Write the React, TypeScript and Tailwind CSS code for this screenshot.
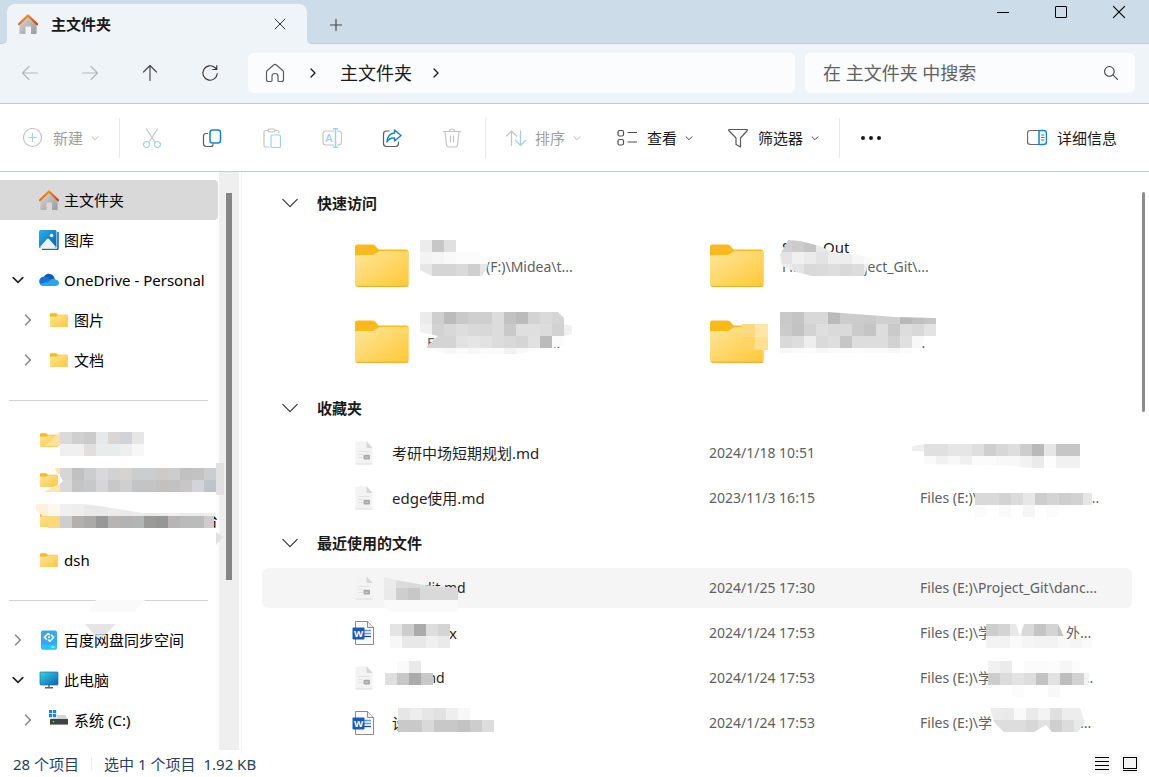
import React from "react";

type SvgProps = { className?: string };

/* ---------- redaction mosaic ---------- */

function Mosaic({ rows, className, clip, cell = 12 }: { rows: string[]; className: string; clip?: string; cell?: number }) {
  const grid = rows.map((r) => r.split(" "));
  const cols = Math.max(...grid.map((r) => r.length));
  const w = cols * cell;
  const h = grid.length * cell;
  const id = React.useId();
  return (
    <svg aria-hidden="true" width={w} height={h} viewBox={`0 0 ${w} ${h}`} shapeRendering="crispEdges" className={`pointer-events-none absolute max-w-none ${className}`}>
      {clip && (
        <clipPath id={id}>
          <polygon points={clip} />
        </clipPath>
      )}
      <g clipPath={clip ? `url(#${id})` : undefined}>
        {grid.map((r, y) =>
          r.map((c, x) =>
            c === "-" ? null : (
              <rect key={`${x}-${y}`} x={x * cell} y={y * cell} width={cell} height={cell} fill={`#${c.length === 2 ? c + c + c : c}`} />
            ),
          ),
        )}
      </g>
    </svg>
  );
}

/* ---------- icons ---------- */

function HomeColor({ className }: SvgProps) {
  const id = React.useId();
  return (
    <svg viewBox="0 0 20 20" className={className} aria-hidden="true">
      <defs>
        <linearGradient id={id + "a"} x1="0" y1="0" x2="1" y2="1">
          <stop offset="0" stopColor="#d9d9d9" />
          <stop offset="1" stopColor="#9a9a9a" />
        </linearGradient>
        <linearGradient id={id + "b"} x1="0" y1="0" x2="1" y2="1">
          <stop offset="0" stopColor="#f9a01b" />
          <stop offset="1" stopColor="#cf3f0c" />
        </linearGradient>
      </defs>
      <path d="M1.400 9.500 10 2l8.600 7.500V19q0 1-1 1H13V12.600H7.500V20H2.400q-1 0-1-1Z" fill={`url(#${id}a)`} />
      <path d="M.8 10.200 10 1.500l9.200 8.700" fill="none" stroke={`url(#${id}b)`} strokeWidth="2.200" strokeLinecap="round" strokeLinejoin="round" />
    </svg>
  );
}

function GalleryIcon() {
  return (
    <svg viewBox="0 0 20 20" className="h-5 w-5" aria-hidden="true">
      <defs>
        <linearGradient id="gal" x1="0" y1="0" x2="1" y2="1">
          <stop offset="0" stopColor="#27b0ee" />
          <stop offset="1" stopColor="#0a5fb8" />
        </linearGradient>
      </defs>
      <path d="M19 2v16q0 1.500-1.500 1.500H3" fill="none" stroke="#1769b5" strokeWidth="1.600" />
      <rect x="0" y="0" width="17.500" height="18" rx="1.500" fill="url(#gal)" />
      <path d="m1 17 7-8q1-1 2 0l7 8q-.5 1-1.500 1H2.500q-1 0-1.500-1Z" fill="#e8f5fe" />
      <circle cx="12.600" cy="5.400" r="1.700" fill="#fff" />
    </svg>
  );
}

function CloudIcon() {
  return (
    <svg viewBox="0 0 20 20" className="h-5 w-5" aria-hidden="true">
      <path d="M4 10.500C4 5.500 8.500 2.500 12.500 4.500c2 1 3 2.500 3.200 4.500L10 13Z" fill="#0a5cb8" />
      <path d="M4.600 16a4.600 4.600 0 0 1 .3-9.200c2.100-.3 3.600.7 5.600 2l4 3L6 16Z" fill="#1078d4" />
      <path d="M10 11.500c1.500-2.600 4-3.200 6.300-2.200 2.500.7 3.700 2 3.700 3.700 0 2-1.500 3-3.500 3H4.600q-2 0-3.600-2Z" fill="#28a8ea" />
    </svg>
  );
}

function Folder({ className }: SvgProps) {
  const id = React.useId();
  return (
    <svg viewBox="0 0 54 43" preserveAspectRatio="none" className={className} aria-hidden="true">
      <defs>
        <linearGradient id={id} x1="0" y1="0" x2="1" y2="1">
          <stop offset="0" stopColor="#ffe69c" />
          <stop offset="1" stopColor="#ffc835" />
        </linearGradient>
      </defs>
      <path d="M0 3q0-2.500 2.500-2.500H17q2 0 3.200 1.200L23.500 5.500H51q2.500 0 2.500 2.500V14H0Z" fill="#fbb91c" />
      <path d="M0 12.500q0-1.500 1.500-1.500H17q1.500 0 3-1.200L23 8q1-.9 2.500-.9H52q1.700 0 1.700 1.700V40q0 2.500-2.500 2.500H2.500Q0 42.500 0 40Z" fill={`url(#${id})`} />
      <path d="M1 41.500q.7.900 2 .9h48q1.400 0 2-.9" fill="none" stroke="#eeb22c" strokeWidth="1.200" />
    </svg>
  );
}

function SyncDisk() {
  return (
    <svg viewBox="0 0 20 20" className="h-5 w-5" aria-hidden="true">
      <rect x="2" y="0.500" width="16" height="19" rx="2" fill="#35a7fb" />
      <path d="M2 14.500h16V17.500q0 2-2 2H4q-2 0-2-2Z" fill="#20c8fb" />
      <path d="M8 9.700 5.300 7.400 9.200 3.500 10.800 5M12 4.800l2.700 2.500-3.900 3.900L9.200 9.700M9 7.300h2" stroke="#fff" strokeWidth="1.600" fill="none" strokeLinejoin="round" />
      <path d="M12.500 17h3" stroke="#fff" strokeWidth="1" />
    </svg>
  );
}

function Monitor() {
  return (
    <svg viewBox="0 0 20 20" className="h-5 w-5" aria-hidden="true">
      <defs>
        <linearGradient id="mon" x1="0" y1="0" x2="1" y2="1">
          <stop offset="0" stopColor="#35d6dd" />
          <stop offset="1" stopColor="#0b62b9" />
        </linearGradient>
      </defs>
      <rect x="1" y="2" width="18" height="13" rx="0.800" fill="url(#mon)" stroke="#2a6f96" strokeWidth="0.700" />
      <path d="M10 15v2.500M6 17.700h8" stroke="#59636b" strokeWidth="1.500" />
    </svg>
  );
}

function Drive() {
  return (
    <svg viewBox="0 0 20 20" className="h-5 w-5" aria-hidden="true">
      <path d="M0 0h3.200v3.200H0zM4 0h3.200v3.200H4zM0 4h3.200v3.200H0zM4 4h3.200v3.200H4z" fill="#1686d9" />
      <path d="M8 5h8l3 4H1L3 8h5Z" fill="#d5d5d5" />
      <rect x="1" y="9" width="18" height="6" rx="0.500" fill="#3f4142" />
      <path d="M1 14.500h18" stroke="#8d8d8d" />
      <circle cx="4.500" cy="11.700" r="0.900" fill="#3ee04e" />
    </svg>
  );
}

function MdFile() {
  return (
    <svg viewBox="0 0 24 24" className="h-6 w-6 shrink-0" aria-hidden="true">
      <path d="M5.500.5H16L21.500 6v17H4.500V1.500q0-1 1-1Z" fill="#f3f3f3" />
      <path d="M4.500 23h17" stroke="#dcdcdc" strokeWidth="1" fill="none" />
      <path d="M15.500.5 21.500 7h-4.500q-1.500 0-1.500-1.500Z" fill="#d6d6d6" />
      <path d="M7.500 10.500h11M7.500 13.500h4M7.500 16.500h4" stroke="#e2e2e2" />
      <rect x="12.500" y="13.800" width="6.500" height="4.600" rx="1" fill="#a9a9a9" />
      <path d="M14 16.200h3.500" stroke="#cfcfcf" />
    </svg>
  );
}

function WordFile() {
  return (
    <svg viewBox="0 0 24 24" className="h-6 w-6 shrink-0" aria-hidden="true">
      <path d="M4.500.5H16.500L22.500 6.500V23.500H4.500Z" fill="#fbfbfb" stroke="#8b8b8b" strokeWidth="1" />
      <path d="M16.500.7V6.500h6" fill="#eee" stroke="#8b8b8b" />
      <path d="M13 9.500h7M13 12.500h7" stroke="#5a9dea" strokeWidth="1.300" />
      <path d="M13 15.500h7" stroke="#154fae" strokeWidth="1.300" />
      <rect x="1.500" y="6.500" width="12" height="12" rx="1" fill="#185abd" />
      <text x="7.500" y="16" textAnchor="middle" fontSize="9.500" fontWeight="700" fill="#fff" fontFamily="Open Sans">W</text>
    </svg>
  );
}

function Line({ d, className, w = 1.2 }: { d: string; className?: string; w?: number }) {
  return (
    <svg viewBox="0 0 20 20" className={className ?? "h-5 w-5"} fill="none" stroke="currentColor" strokeWidth={w} strokeLinecap="round" strokeLinejoin="round" aria-hidden="true">
      <path d={d} />
    </svg>
  );
}

function Caret() {
  return (
    <svg viewBox="0 0 8 8" className="h-2 w-2 opacity-80" fill="none" stroke="currentColor" aria-hidden="true">
      <path d="M.8 2.500 4 5.700l3.200-3.200" />
    </svg>
  );
}

const gray = "#c4c4c4";
const pale = "#a3cff2";

const ico = {
  plus: (
    <>
      <circle cx="9.500" cy="9.500" r="9" stroke={gray} />
      <path d="M9.500 5.500v8M5.500 9.500h8" stroke={pale} />
    </>
  ),
  cut: (
    <>
      <path d="M4.500 1 13 14M15.500 1 7 14" stroke={gray} />
      <circle cx="4.500" cy="16.500" r="3" stroke={pale} />
      <circle cx="15.500" cy="16.500" r="3" stroke={pale} />
    </>
  ),
  copy: (
    <>
      <path d="M5.500 5.500H4Q1.500 5.500 1.500 8v7.500Q1.500 18.500 4.500 18.500H8.500Q11 18.500 11 16.500" stroke="#5d5d5d" />
      <rect x="8" y="2" width="10.500" height="13" rx="2.500" stroke="#1583d8" strokeWidth="1.500" />
    </>
  ),
  paste: (
    <>
      <path d="M6 2.500H3.500Q2 2.500 2 4v13.500Q2 19 3.500 19H7M13 2.500h2.500Q17 2.500 17 4v1" stroke={gray} />
      <rect x="6" y="1" width="7" height="3" rx="1.500" stroke={gray} />
      <rect x="9" y="7" width="9.500" height="12.500" rx="1.500" stroke={pale} />
    </>
  ),
  rename: (
    <>
      <path d="M11.500 3H4Q1 3 1 6v8q0 3 3 3h7.500M15.500 3q4 0 4 3v8q0 3-4 3" stroke={gray} />
      <path d="M13.500 1v18M11.500.8h4M11.500 19.200h4" stroke={pale} strokeWidth="1.500" />
      <text x="7" y="14" textAnchor="middle" fontSize="11" fill={pale} stroke="none" fontWeight="600" fontFamily="Open Sans">A</text>
    </>
  ),
  share: (
    <>
      <path d="M7 3H4.500Q1.500 3 1.500 6v9.500q0 3 3 3h9q3 0 3-3V14" stroke="#5d5d5d" />
      <path d="M12.500 2 19 7.500 12.500 13V10q-5-.5-7.500 4Q5.500 5.500 12.500 5Z" stroke="#1583d8" strokeWidth="1.500" />
    </>
  ),
  trash: (
    <>
      <path d="M1.500 3.500h17M3 3.500 4.500 17q.3 2 2.500 2h6q2.200 0 2.500-2L17 3.500M7.500 3.500q0-2.500 2.500-2.500t2.500 2.500" stroke={gray} />
      <path d="M8.500 8v6M11.500 8v6" stroke={gray} />
    </>
  ),
  sort: (
    <>
      <path d="M5.500 17.500V3M.5 8l5-5 5 5" stroke={gray} />
      <path d="M14.500 3v14.500M9.500 12.500l5 5 5-5" stroke={pale} strokeWidth="1.300" />
    </>
  ),
  view: (
    <>
      <rect x="1" y="2.500" width="5.500" height="5.500" rx="1.500" stroke="#4f4f4f" />
      <rect x="1" y="11.500" width="5.500" height="5.500" rx="1.500" stroke="#4f4f4f" />
      <path d="M11 4.500h9M11 14h9" stroke="#4f4f4f" />
    </>
  ),
  filter: <path d="M1 1.500h18q.5 0 .3 1L12.500 10v9L8 16.500V10L.8 2.500Q.5 1.500 1 1.500Z" stroke="#5a5a5a" />,
  details: (
    <>
      <path d="M12 2.500H3.500q-3 0-3 3v8q0 3 3 3H12" stroke="#6a6a6a" />
      <path d="M12 2.500h4.500q3 0 3 3v8q0 3-3 3H12Z" stroke="#1583d8" strokeWidth="1.500" />
      <path d="M14.500 7h2.500M14.500 9.500h2.500M14.500 12h2.500" stroke="#1583d8" />
    </>
  ),
};

function Tool({ name }: { name: keyof typeof ico }) {
  return (
    <svg viewBox="0 0 20 20" className="h-5 w-5 shrink-0" fill="none" strokeWidth="1.200" strokeLinecap="round" strokeLinejoin="round" aria-hidden="true">
      {ico[name]}
    </svg>
  );
}

/* ---------- header ---------- */

function TitleBar() {
  return (
    <header className="flex h-11 items-end bg-[#ccdce9]">
      <div className="h-11 w-[7px] bg-[#eff4f9]">
        <div className="h-full rounded-br-[5px] border-b border-[#bccddc] bg-[#ccdce9]" />
      </div>
      <div className="flex h-10 w-[300px] items-center rounded-t-lg bg-[#eff4f9] pr-5 pl-[11px]">
        <HomeColor className="h-5 w-5" />
        <span className="ml-[13px] flex-1 font-bold text-[#191919]">主文件夹</span>
        <button aria-label="关闭标签页" className="text-[#333]">
          <Line className="h-[14px] w-[14px]" d="M3 3l14 14M17 3 3 17" w={1.4} />
        </button>
      </div>
      <div className="h-11 flex-1 bg-[#eff4f9]">
        <div className="flex h-full items-start justify-between rounded-bl-[5px] border-b border-[#bccddc] bg-[#ccdce9]">
          <button aria-label="新标签页" className="mt-[18px] ml-[22px] text-[#444]">
            <Line className="h-[14px] w-[14px]" d="M10 2v16M2 10h16" w={1.6} />
          </button>
          <div className="flex pr-[1px] text-black">
            <button aria-label="最小化" className="flex h-6 w-[58px] items-center justify-center">
              <span className="h-px w-3 bg-black" />
            </button>
            <button aria-label="最大化" className="flex h-6 w-[58px] items-center justify-center">
              <span className="h-3 w-3 rounded-[1px] border border-black" />
            </button>
            <button aria-label="关闭" className="flex h-6 w-[58px] items-center justify-center">
              <Line className="h-[14px] w-[14px]" d="M2 2l16 16M18 2 2 18" w={1.6} />
            </button>
          </div>
        </div>
      </div>
    </header>
  );
}

function NavBar() {
  const cls = "flex h-10 w-[60px] items-center justify-center";
  return (
    <nav className="flex h-[60px] items-start border-b border-[#bccad6] bg-[#eff4f9] pt-[9px] pr-[14px]">
      <button aria-label="后退" className={`${cls} text-[#b3b7ba]`}>
        <Line d="M17.500 10h-15M9 3.500 2.500 10 9 16.500" />
      </button>
      <button aria-label="前进" className={`${cls} text-[#b3b7ba]`}>
        <Line d="M2.500 10h15M11 3.500l6.500 6.500-6.500 6.500" />
      </button>
      <button aria-label="向上" className={`${cls} text-[#4a4a4a]`}>
        <Line d="M10 17.500v-15M3.500 9 10 2.500 16.500 9" />
      </button>
      <button aria-label="刷新" className={`${cls} text-[#333]`}>
        <Line d="M17.300 10.500a7.200 7.200 0 1 1-2.500-6L16.500 6M16.800 2.500v4h-4" w={1.1} />
      </button>
      <div className="ml-2 flex h-10 flex-1 items-center rounded-md bg-[#fbfcfe] pl-[17px] text-lg text-[#1a1a1a]">
        <span className="text-[#5c5c5c]">
          <Line d="M1.500 9.500q0-1.500 1-2.200L8.600 2Q10 .8 11.400 2l6.100 5.300q1 .7 1 2.200v7q0 2-2 2H14q-1 0-1-1V13q0-2.500-3-2.500T7 13v4.500q0 1-1 1H3.500q-2 0-2-2Z" />
        </span>
        <Line className="ml-5 h-4 w-4" d="M7.500 5 12.500 10l-5 5" w={1.600} />
        <a href="#home" className="ml-[19px]">主文件夹</a>
        <Line className="ml-4 h-4 w-4" d="M7.500 5 12.500 10l-5 5" w={1.600} />
      </div>
      <label className="ml-[10px] flex h-10 w-[330px] items-center rounded-md bg-[#fbfcfe] pr-4 pl-[18px]">
        <input aria-label="搜索" placeholder="在 主文件夹 中搜索" className="min-w-0 flex-1 bg-transparent text-lg outline-none placeholder:text-[#606163]" />
        <Line className="h-4 w-4 text-[#333]" d="M8 2a6 6 0 1 0 0 12A6 6 0 0 0 8 2M12.500 12.500l5.500 5.500" w={1.3} />
      </label>
    </nav>
  );
}

function Divider() {
  return <span className="h-10 w-px shrink-0 bg-[#e8e8e8]" />;
}

function Toolbar() {
  const icons: [keyof typeof ico, string][] = [
    ["cut", "剪切"],
    ["copy", "复制"],
    ["paste", "粘贴"],
    ["rename", "重命名"],
    ["share", "共享"],
    ["trash", "删除"],
  ];
  return (
    <div className="flex h-[68px] items-center border-b border-[#c3ccd4] pr-8 pl-[23px] text-[#1a1a1a]">
      <button disabled className="mr-5 flex items-center text-[#9f9f9f]">
        <Tool name="plus" />
        <span className="mr-2 ml-[10px]">新建</span>
        <Caret />
      </button>
      <Divider />
      <div className="flex pr-[3px] pl-[2px]">
        {icons.map(([name, label]) => (
          <button key={name} aria-label={label} className="flex h-10 w-[60px] items-center justify-center">
            <Tool name={name} />
          </button>
        ))}
      </div>
      <Divider />
      <button disabled className="ml-5 flex items-center text-[#9f9f9f]">
        <Tool name="sort" />
        <span className="mr-2 ml-[9px]">排序</span>
        <Caret />
      </button>
      <button className="ml-9 flex items-center">
        <Tool name="view" />
        <span className="mr-2 ml-[10px]">查看</span>
        <Caret />
      </button>
      <button className="mr-5 ml-[35px] flex items-center">
        <Tool name="filter" />
        <span className="mr-2 ml-[10px]">筛选器</span>
        <Caret />
      </button>
      <Divider />
      <button aria-label="更多" className="ml-[21px] flex gap-1">
        <span className="h-1 w-1 rounded-full bg-[#1a1a1a]" />
        <span className="h-1 w-1 rounded-full bg-[#1a1a1a]" />
        <span className="h-1 w-1 rounded-full bg-[#1a1a1a]" />
      </button>
      <button className="ml-auto flex items-center gap-[10px]">
        <Tool name="details" />
        详细信息
      </button>
    </div>
  );
}

/* ---------- sidebar ---------- */

type TreeProps = { icon: React.ReactNode; label?: string; open?: boolean; closed?: boolean; child?: boolean; active?: boolean; children?: React.ReactNode };

function TreeRow({ icon, label, open, closed, child, active, children }: TreeProps) {
  return (
    <li className={`relative flex h-10 items-center ${active ? "rounded-r-sm bg-[#d9d9d9]" : ""} ${child ? "pl-5" : "pl-[10px]"}`}>
      <span className="w-4 shrink-0">
        {open && <Line className="h-4 w-4 text-[#222]" d="M4 7l6 6 6-6" w={2} />}
        {closed && <Line className="h-4 w-4 text-[#8a8a8a]" d="M7 4l6 6-6 6" w={2} />}
      </span>
      <span className="ml-3 flex w-[22px] shrink-0 items-center justify-center">{icon}</span>
      {label && <a href="#folder" className="ml-1 whitespace-nowrap text-black">{label}</a>}
      {children}
    </li>
  );
}

function Separator() {
  return (
    <li aria-hidden="true" className="flex h-10 items-center pr-[10px] pl-[9px]">
      <span className="h-px w-full bg-[#d2d2d2]" />
    </li>
  );
}

function Sidebar() {
  const folder = <Folder className="h-[14px] w-[18px]" />;
  return (
    <aside className="flex w-[242px] shrink-0 border-r border-[#f3f3f3]">
      <ul className="relative z-10 w-[218px] pt-2">
        <TreeRow active icon={<HomeColor className="h-5 w-5" />} label="主文件夹" />
        <TreeRow icon={<GalleryIcon />} label="图库" />
        <TreeRow open icon={<CloudIcon />} label="OneDrive - Personal" />
        <TreeRow child closed icon={folder} label="图片" />
        <TreeRow child closed icon={folder} label="文档" />
        <Separator />
        <TreeRow icon={folder}>
          <svg className="absolute top-3 left-[45px]" width="15" height="14" aria-hidden="true">
            <path d="M0 14 15 0v14Z" fill="#fde29b" />
          </svg>
          <Mosaic className="top-3 left-[60px]" rows={["da cf cb e7e8ea dad6d3 d1d3d9 e6", "f0 f0 e1dfde e9eceb e9ecec ef f7"]} />
        </TreeRow>
        <TreeRow icon={folder}>
          <svg className="absolute top-2 left-11" width="18" height="24" aria-hidden="true">
            <path d="M11 0h5v6h-3ZM0 24l16-9v9Z" fill="#fde7a9" />
            <path d="M14 7l4 6-4 5Z" fill="#fff" />
          </svg>
          <Mosaic
            className="top-2 left-[60px]"
            clip="0,0 156,0 156,24 0,24 0,16 3,13 0,8"
            rows={[
              "d6 c1 cccdcf d9d9dc d3d2d3 d6d4d3 cccdcf cccdcf cccbca cdcdce c1 c3 cccdcf",
              "d9 c5 c7c8ca d6d6d8 c8 cf c3c4c6 c4 c2c1c0 c2 c8c6c6 d3d4da bfc4c9",
            ]}
          />
          <Mosaic className="top-[3px] left-[216px]" cell={8} rows={["e1", "e1", "e1", "e1"]} />
        </TreeRow>
        <TreeRow icon={folder}>
          <span className="absolute right-0">台</span>
          <Mosaic
            className="top-1 left-9"
            clip="0,0 48,0 70,3 107,9 180,9 180,12 178,12 178,24 12,24 12,17 0,6"
            rows={["ffefdc fdf7f0 f0 ee e9 e9 ec ea ec e9 ec f0 eb ec ee", "ffd87c ffd87c ce b3b1b0 abaaa8 98 b7b5b3 b3 b2b6b4 9a9b98 96 b6b4b5 bb bb cfcccb"]}
          />
          <svg className="absolute top-8 left-[216px]" width="7" height="13" aria-hidden="true">
            <path d="M0 0 7 5 0 13Z" fill="#e0e0e0" />
          </svg>
        </TreeRow>
        <TreeRow icon={folder} label="dsh" />
        <Separator />
        <TreeRow closed icon={<SyncDisk />} label="百度网盘同步空间">
          <svg className="absolute -top-5 left-[85px]" width="60" height="42" aria-hidden="true">
            <path d="M11 0h49L49 12H3Z" fill="#fafafa" />
            <path d="M0 24h31L18 37h-7Z" fill="#dedee0" fillOpacity="0.8" />
          </svg>
        </TreeRow>
        <TreeRow open icon={<Monitor />} label="此电脑" />
        <TreeRow child closed icon={<Drive />} label="系统 (C:)" />
      </ul>
      <div className="ml-px flex w-5 justify-center bg-[#efefef] pt-[21px]">
        <span className="h-[387px] w-[6px] bg-[#858585]" />
      </div>
    </aside>
  );
}

/* ---------- content ---------- */

function SectionHeader({ children }: { children: string }) {
  return (
    <h2 className="flex h-10 items-center pl-[19px] font-bold text-[#1a1a1a]">
      <button className="flex items-center gap-[18px]">
        <Line className="h-[18px] w-[18px] text-[#333]" d="M2 6l8 8 8-8" w={1.3} />
        {children}
      </button>
    </h2>
  );
}

function QuickItem({ children }: { children: React.ReactNode }) {
  return (
    <li className="relative flex h-[76px] items-center pb-[2px] leading-5 text-[#1a1a1a]">
      <Folder className="h-[43px] w-[54px]" />
      {children}
    </li>
  );
}

function QuickAccess() {
  return (
    <ul className="grid grid-cols-[355px_355px] pt-[5px] pb-2 pl-[93px]">
      <QuickItem>
        <span className="mt-1 ml-[77px] text-sm text-[#606060]">(F:)\Midea\t...</span>
        <Mosaic className="top-3 left-[65px]" clip="0,0 36,0 36,12 60,12 68,24 67,28 62,36 12,36 0,30" rows={["ec c7 e0", "f3 f6 f9 fc fc fc", "e6 d5 d5 da cf e6"]} />
      </QuickItem>
      <QuickItem>
        <div className="-mt-4 ml-[18px]">
          <p className="flex">
            <span className="w-[41px]">S</span>Out
          </p>
          <p className="flex text-sm text-[#606060]">
            <span className="w-[82px]">Files</span>ject_Git\...
          </p>
        </div>
        <Mosaic
          className="top-3 left-[70px]"
          clip="8,0 20,1 40,6 52,12 72,14 93,18 87,28 84,36 32,36 16,32 2,26 0,15"
          rows={["d0 cc c4 e8 e8 e8 e8", "e4 f0 eb e3 ee ee f6 fa", "ec e4 d9 db de d9 dc ee"]}
        />
      </QuickItem>
      <QuickItem>
        <span className="mt-1 ml-[18px] flex text-sm text-[#606060]">
          <span className="w-[122px]">F</span>...
        </span>
        <Mosaic
          className="top-2 left-[65px]"
          clip="0,0 138,0 144,6 144,12 152,14 152,22 144,24 144,34 130,36 96,42 24,42 6,35 18,24 0,20"
          rows={["eb cf bb c9 cf cf dc c2 bb d3 da d5", "f0 d2 d8 dd d9 d8 dc c9 df df dc d2 f0", "d4 d4 d4 e2 e5 e2 dc d9 d5 e1 bb fb", "fa fa f7 fb f7 fb fa f2 f8 fb fb"]}
        />
      </QuickItem>
      <QuickItem>
        <span className="mt-1 ml-[150px] text-sm text-[#606060]">...</span>
        <Mosaic className="top-5 left-[32px]" cell={13} rows={["ffd97f fde6a8", "ffd465 fee08f"]} />
        <Mosaic
          className="top-2 left-[70px]"
          clip="0,0 48,0 115,5 156,6 156,24 144,24 142,36 130,41 0,41"
          rows={["c9 c4 d8 d8 ba cc cc ca d0 d0 b8 c0 c6", "cb c3 d3 de da da cb c5 dd ca dd d8 e3", "d9 dd ee da de c6 dd dd dd d2 e0 f8", "f7 fa fc f7 fa fa fd fa fa f7 fc"]}
        />
      </QuickItem>
    </ul>
  );
}

type FileRow = { kind: "md" | "word"; name: React.ReactNode; date: string; path: React.ReactNode; active?: boolean };

const favorites: FileRow[] = [
  {
    kind: "md",
    name: "考研中场短期规划.md",
    date: "2024/1/18 10:51",
    path: (
      <Mosaic
        className="top-[11px] -left-2"
        clip="0,2 12,0 168,0 168,24 120,24 90,21 12,20 12,7 0,7"
        rows={["ef e0 e0 e6 e6 df cf d7 de cd b9 e6 c6 c6", "fa fa f1 f8 f0 fb fb f8 f8 f2 ea fd f1 f1"]}
      />
    ),
  },
  {
    kind: "md",
    name: "edge使用.md",
    date: "2023/11/3 16:15",
    path: (
      <>
        <span className="flex"><span className="w-[168px]">Files (E:)\</span>...</span>
        <Mosaic className="top-[15px] left-[55px]" clip="0,0 117,0 117,11 110,24 0,24" rows={["d9 d9 d3 db e7 cd d4 ce d2 e6", "fb - fa - f6 - fb"]} />
      </>
    ),
  },
];

const recent: FileRow[] = [
  {
    kind: "md",
    active: true,
    name: (
      <>
        <span className="ml-[31px] text-sm">dit.md</span>
        <Mosaic className="top-2 left-[122px]" clip="0,1 12,4 40,9 74,12 74,36 8,36 0,30" rows={["eb dc da dc de e0 e0", "ea ce c7 d9 d9 d9 d9", "fa fa fa fa fa fa fa"]} />
      </>
    ),
    date: "2024/1/25 17:30",
    path: "Files (E:)\\Project_Git\\danc...",
  },
  {
    kind: "word",
    name: (
      <>
        <span className="ml-[57px]">x</span>
        <Mosaic className="top-[11px] left-[128px]" rows={["e4 cd ab dd d4", "f7 e8 e8 f0 ea"]} />
      </>
    ),
    date: "2024/1/24 17:53",
    path: (
      <>
        <span className="flex">
          <span className="w-[102px]">Files (E:)\学</span>
          <span className="w-[44px]">大</span>
          <span>外...</span>
        </span>
        <Mosaic className="top-[11px] left-[66px]" clip="0,0 30,0 34,12 38,0 72,0 79,15 106,15 106,24 0,24" rows={["cd d4 e8 d9 c5 d4 c3", "f3 f3 fa f5 f3 f3 f8 f5 fa"]} />
      </>
    ),
  },
  {
    kind: "md",
    name: (
      <>
        <span className="ml-[31px] text-sm">md</span>
        <Mosaic className="top-[3px] left-[123px]" rows={["- fa ea -", "df c7 ab c8"]} />
      </>
    ),
    date: "2024/1/24 17:53",
    path: (
      <>
        <span className="flex"><span className="w-[162px]">Files (E:)\学</span>...</span>
        <Mosaic className="top-[3px] left-[68px]" clip="0,0 92,0 92,12 102,12 100,24 92,36 0,36" rows={["f1 eb - fb fb fc f6 fc", "cd dc e3 dd c2 e2 bd d2 f3", "- - fc - - f8"]} />
      </>
    ),
  },
  {
    kind: "word",
    name: (
      <>
        <span>设</span>
        <Mosaic className="top-[5px] left-[136px]" rows={["e6 ee e6 e1 ee f7", "c9 c9 d9 c8 c8 c3 cd dc"]} />
      </>
    ),
    date: "2024/1/24 17:53",
    path: (
      <>
        <span className="flex"><span className="w-[160px]">Files (E:)\学</span>...</span>
        <Mosaic className="top-[5px] left-[70px]" clip="0,0 90,0 95,14 88,24 62,24 56,17 44,24 14,24 4,14" rows={["ec ea fa ea f3 e0 ed ed", "dd dd dd d7 e1 cf dc e8"]} />
      </>
    ),
  },
];

function FileTable({ label, rows }: { label: string; rows: FileRow[] }) {
  return (
    <table aria-label={label} className="w-full table-fixed border-separate border-spacing-x-0 border-spacing-y-[5px] text-left">
      <tbody>
        {rows.map((r, i) => (
          <tr key={i} className={`h-10 ${r.active ? "bg-[#f5f5f5]" : ""}`}>
            <td className="relative w-[447px] rounded-l-md p-0 pl-[89px]">
              <div className="flex items-center text-[#1f1f1f]">
                {r.kind === "md" ? <MdFile /> : <WordFile />}
                <span className="ml-[17px] flex items-center">{r.name}</span>
              </div>
            </td>
            <td className="w-[211px] p-0 text-sm text-[#606060]">{r.date}</td>
            <td className="relative rounded-r-md p-0 text-sm whitespace-nowrap text-[#606060]">{r.path}</td>
          </tr>
        ))}
      </tbody>
    </table>
  );
}

export default function App() {
  return (
    <div className="flex min-h-screen flex-col bg-white font-['Noto_Sans','Noto_Sans_CJK_SC',sans-serif] text-[15px] leading-5">
      <TitleBar />
      <NavBar />
      <Toolbar />
      <div className="flex flex-1">
        <Sidebar />
        <main className="min-w-0 flex-1 pt-[11px] pl-5">
          <SectionHeader>快速访问</SectionHeader>
          <QuickAccess />
          <SectionHeader>收藏夹</SectionHeader>
          <FileTable label="收藏夹" rows={favorites} />
          <SectionHeader>最近使用的文件</SectionHeader>
          <FileTable label="最近使用的文件" rows={recent} />
        </main>
        <div className="flex w-[17px] shrink-0 justify-center pt-5 pl-[5px]">
          <span className="h-[220px] w-[3px] rounded-full bg-[#8c8c8c]" />
        </div>
      </div>
      <footer className="flex h-[27px] items-center pr-[9px] pl-[13px] text-[#27415f]">
        <span>28 个项目</span>
        <span className="mx-3 h-[13px] w-px bg-[#ececec]" />
        <span>选中 1 个项目</span>
        <span className="ml-2">1.92 KB</span>
        <div className="ml-auto flex gap-2">
          <button aria-label="详细信息视图" className="flex h-5 w-5 flex-col items-center justify-center gap-[3px] rounded-sm bg-[#f5f5f5]">
            <span className="h-px w-[14px] bg-black" />
            <span className="h-px w-[14px] bg-black" />
            <span className="h-px w-[14px] bg-black" />
            <span className="h-px w-[14px] bg-black" />
          </button>
          <button aria-label="大图标视图" className="flex h-5 w-5 flex-col items-center justify-center gap-px rounded-sm bg-[#f5f5f5]">
            <span className="h-3 w-[14px] border border-black" />
            <span className="h-px w-[14px] bg-black" />
          </button>
        </div>
      </footer>
    </div>
  );
}
